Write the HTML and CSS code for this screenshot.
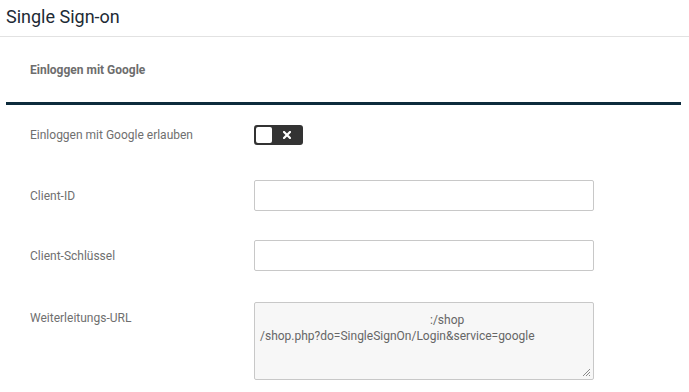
FILE: index.html
```html
<!DOCTYPE html>
<html lang="de">
<head>
<meta charset="utf-8">
<link rel="stylesheet" href="styles.css">
</head>
<body>
<header class="page-head">
  <h1 class="page-title">Single Sign-on</h1>
</header>
<section class="panel">
  <div class="panel-head">
    <h2 class="panel-title">Einloggen mit Google</h2>
  </div>
  <div class="form">
    <div class="row row-toggle">
      <label class="label">Einloggen mit Google erlauben</label>
      <div class="toggle">
        <span class="knob"></span>
        <svg class="toggle-x" width="8" height="8" viewBox="0 0 8 8">
          <path d="M1 1L7 7M7 1L1 7" stroke="#ffffff" stroke-width="2.2" stroke-linecap="square" fill="none"/>
        </svg>
      </div>
    </div>
    <div class="row row-id">
      <label class="label">Client-ID</label>
      <div class="input"></div>
    </div>
    <div class="row row-key">
      <label class="label">Client-Schlüssel</label>
      <div class="input"></div>
    </div>
    <div class="row row-area">
      <label class="label">Weiterleitungs-URL</label>
      <div class="textarea">
        <div class="line line-first">:/shop</div>
        <div class="line">/shop.php?do=SingleSignOn/Login&amp;service=google</div>
        <svg class="grip" width="9" height="9" viewBox="0 0 9 9">
          <path d="M8 1L1 8M8 4L4 8M8 7L7 8" stroke="#8a8a8a" stroke-width="1" fill="none"/>
        </svg>
      </div>
    </div>
  </div>
</section>
</body>
</html>
```
FILE: styles.css
```css
html, body {
  margin: 0;
  padding: 0;
  background: #ffffff;
  font-family: Roboto, "Liberation Sans", Arial, sans-serif;
}
.page-head {
  height: 37px;
  border-bottom: 1px solid #e2e2e2;
  box-sizing: border-box;
  padding: 6px 6px 0;
}
.page-title {
  margin: 0;
  font-size: 18px;
  font-weight: 400;
  color: #1d2a35;
  line-height: 22px;
}
.panel {
  padding: 0 8px 0 6px;
}
.panel-head {
  height: 65px;
  border-bottom: 3px solid #0d2b3c;
  padding-left: 24px;
  display: flex;
  align-items: center;
}
.panel-title {
  margin: 0;
  font-size: 12px;
  font-weight: 700;
  color: #6d6d6d;
}
.form {
  padding-left: 24px;
  padding-top: 20px;
  display: flex;
  flex-direction: column;
}
.row {
  display: flex;
  align-items: center;
}
.row-id {
  margin-top: 35px;
}
.row-key {
  margin-top: 29px;
}
.row-area {
  margin-top: 31px;
  align-items: flex-start;
}
.label {
  width: 224px;
  font-size: 12px;
  color: #6f6f6f;
}
.row-area .label {
  padding-top: 9px;
}
.toggle {
  width: 49px;
  height: 20px;
  background: #333333;
  border-radius: 3px;
  box-sizing: border-box;
  padding: 2px;
  display: flex;
  align-items: center;
}
.knob {
  width: 16px;
  height: 16px;
  background: #ffffff;
  border-radius: 2px;
}
.toggle-x {
  margin-left: 11px;
}
.input {
  width: 340px;
  height: 31px;
  box-sizing: border-box;
  border: 1px solid #c8c8c8;
  border-radius: 2px;
  background: #ffffff;
}
.textarea {
  width: 340px;
  height: 78px;
  box-sizing: border-box;
  border: 1px solid #c8c8c8;
  border-radius: 2px;
  background: #f7f7f7;
  padding: 9px 4px 0 5px;
  position: relative;
}
.line {
  font-size: 12px;
  line-height: 16px;
  color: #666666;
}
.line-first {
  padding-left: 170px;
}
.grip {
  position: absolute;
  right: 2px;
  bottom: 2px;
}
```
